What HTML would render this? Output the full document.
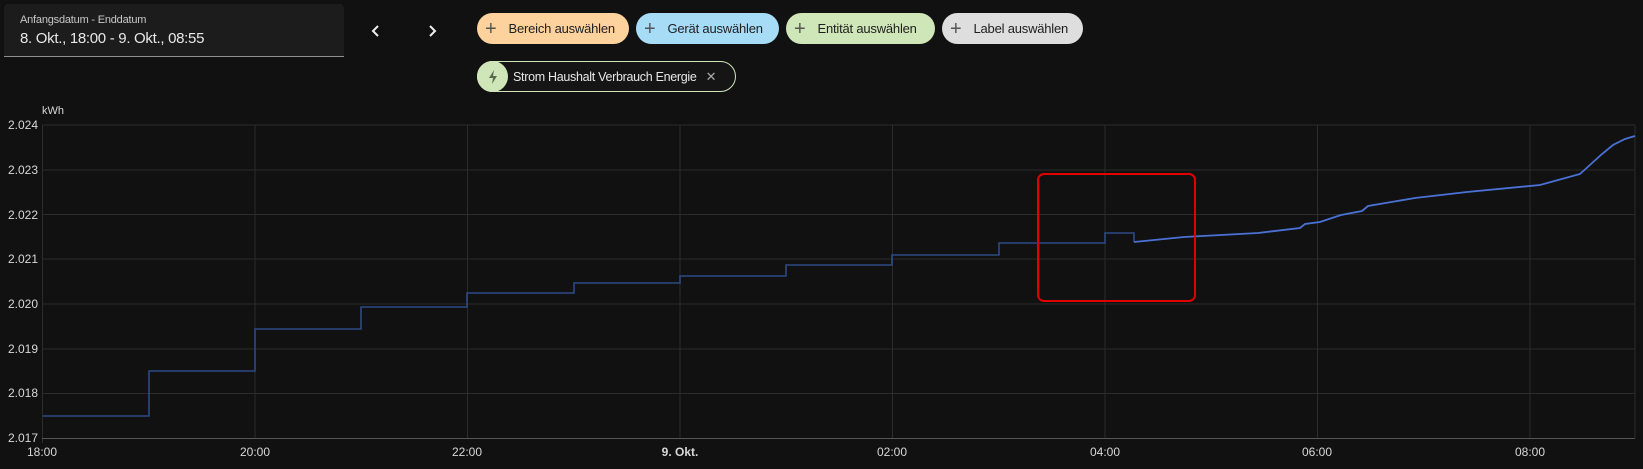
<!DOCTYPE html>
<html><head><meta charset="utf-8"><style>
body{margin:0;width:1643px;height:469px;background:#111111;overflow:hidden;font-family:"Liberation Sans",sans-serif;color:#e1e1e1;position:relative}
.date{position:absolute;left:4px;top:4px;width:340px;height:52px;background:#1c1c1c;border-bottom:1px solid #8f8f8f;border-radius:4px 4px 0 0}
.date .l{position:absolute;left:16px;top:10px;font-size:11px;color:#c8c8c8;letter-spacing:-0.2px}
.date .v{position:absolute;left:16px;top:26px;font-size:15px;color:#e8e8e8;letter-spacing:-0.3px}
.chip{position:absolute;height:31px;border-radius:16px;font-size:13px;color:#1e1e1e;display:flex;align-items:center;box-sizing:border-box;white-space:nowrap;letter-spacing:-0.2px}
.chip .p{font-size:20px;color:#555;margin:0 12px 0 8px;font-weight:300;line-height:1}
</style></head><body>
<div class="date"><div class="l">Anfangsdatum - Enddatum</div><div class="v">8. Okt., 18:00 - 9. Okt., 08:55</div></div>
<svg style="position:absolute;left:368px;top:23px" width="80" height="16"><path d="M10 3 L5 8 L10 13" stroke="#eee" stroke-width="2" fill="none"/><path d="M62 3 L67 8 L62 13" stroke="#eee" stroke-width="2" fill="none"/></svg>
<div class="chip" style="left:477px;top:13px;width:152px;background:#fdd29c"><span class="p">+</span>Bereich auswählen</div>
<div class="chip" style="left:636px;top:13px;width:143px;background:#a7dcf7"><span class="p">+</span>Gerät auswählen</div>
<div class="chip" style="left:786px;top:13px;width:149px;background:#cfe6b8"><span class="p">+</span>Entität auswählen</div>
<div class="chip" style="left:942px;top:13px;width:141px;background:#dedede"><span class="p">+</span>Label auswählen</div>
<div class="chip" style="left:477px;top:61px;width:259px;border:1px solid #cfe6b8;color:#e8e8e8;background:#151515;font-size:12.5px;letter-spacing:-0.3px">
<div style="width:31px;height:31px;flex:none;border-radius:16px;background:#cfe6b8;margin-left:-1px;display:flex;align-items:center;justify-content:center"><svg width="14" height="16" viewBox="0 0 14 16"><path d="M8 1 L3 9 L7 9 L6 15 L11 7 L7 7 Z" fill="#5a6a50"/></svg></div>
<span style="margin-left:5px">Strom Haushalt Verbrauch Energie</span><span style="margin-left:9px;color:#aaa;font-size:13px">✕</span></div>
<svg style="position:absolute;left:0;top:0" width="1643" height="469">
<g stroke="#2c2c2c" stroke-width="1">
<line x1="42.5" y1="125" x2="1635" y2="125"/><line x1="42.5" y1="170" x2="1635" y2="170"/><line x1="42.5" y1="214.5" x2="1635" y2="214.5"/><line x1="42.5" y1="259" x2="1635" y2="259"/><line x1="42.5" y1="304" x2="1635" y2="304"/><line x1="42.5" y1="349" x2="1635" y2="349"/><line x1="42.5" y1="393.5" x2="1635" y2="393.5"/>
<line x1="42.5" y1="125" x2="42.5" y2="443"/><line x1="255" y1="125" x2="255" y2="438"/><line x1="467.5" y1="125" x2="467.5" y2="438"/><line x1="680" y1="125" x2="680" y2="438"/><line x1="892.5" y1="125" x2="892.5" y2="438"/><line x1="1105" y1="125" x2="1105" y2="438"/><line x1="1317.5" y1="125" x2="1317.5" y2="438"/><line x1="1530" y1="125" x2="1530" y2="438"/><line x1="1635" y1="125" x2="1635" y2="438"/>
</g>
<line x1="42" y1="438.5" x2="1635" y2="438.5" stroke="#555"/>
<g font-size="12" fill="#d8d8d8" text-anchor="end">
<text x="38" y="129">2.024</text><text x="38" y="174">2.023</text><text x="38" y="219">2.022</text><text x="38" y="263">2.021</text><text x="38" y="308">2.020</text><text x="38" y="353">2.019</text><text x="38" y="397">2.018</text><text x="38" y="442">2.017</text>
</g>
<text x="42" y="114" font-size="11" fill="#d8d8d8">kWh</text>
<g font-size="12" fill="#d8d8d8" text-anchor="middle">
<text x="42" y="456">18:00</text><text x="255" y="456">20:00</text><text x="467" y="456">22:00</text><text x="680" y="456" font-weight="bold">9. Okt.</text><text x="892" y="456">02:00</text><text x="1105" y="456">04:00</text><text x="1317" y="456">06:00</text><text x="1530" y="456">08:00</text>
</g>
<polyline fill="none" stroke="#2d4a85" stroke-width="1.6" points="43,416 149,416 149,371 255,371 255,329 361,329 361,307 467,307 467,293 574,293 574,283 680,283 680,276 786,276 786,265 892,265 892,255 999,255 999,243 1105,243 1105,233 1134,233 1134,242"/>
<polyline fill="none" stroke="#4a72d6" stroke-width="1.8" points="1134,242 1184,237 1258,233 1300,228 1305,224 1320,222 1341,215 1362,211 1368,206 1415,198 1467,192 1540,185 1580,174 1602,154 1613,145 1625,139 1635,136"/>
<rect x="1038" y="174" width="157" height="127" rx="6" fill="none" stroke="#e00000" stroke-width="2"/>
</svg>
</body></html>
